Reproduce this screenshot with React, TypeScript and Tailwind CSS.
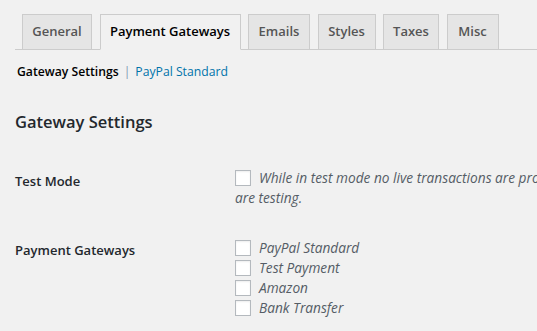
const tabs = [
  { label: "General", w: "w-[70px]" },
  { label: "Payment Gateways", w: "w-[141px]", active: true },
  { label: "Emails", w: "w-[62px]" },
  { label: "Styles", w: "w-[58px]" },
  { label: "Taxes", w: "w-[56px]" },
  { label: "Misc", w: "w-[52px]" },
];

const gateways = ["PayPal Standard", "Test Payment", "Amazon", "Bank Transfer"];

function Checkbox() {
  return (
    <span className="inline-block h-4 w-4 shrink-0 border border-[#b4b9be] bg-white shadow-[inset_0_1px_2px_rgba(0,0,0,0.07)]" />
  );
}

export default function App() {
  return (
    <div
      className="h-[331px] w-[537px] overflow-hidden bg-[#f1f1f1] pt-[14px] text-[#23282d]"
      style={{ fontFamily: '"Open Sans", "Noto Sans", sans-serif' }}
    >
      {/* tab bar */}
      <div className="ml-[15px] flex gap-[7.5px] border-b border-[#ccc] pl-[7px]">
        {tabs.map((t) => (
          <div
            key={t.label}
            className={
              t.active
                ? `${t.w} -mb-px flex h-[36px] items-center justify-center border border-b-[#f1f1f1] border-[#ccc] bg-[#f1f1f1] text-[13px] font-semibold text-black`
                : `${t.w} flex h-[35px] items-center justify-center border border-b-0 border-[#ccc] bg-[#e5e5e5] text-[13px] font-semibold text-[#555]`
            }
          >
            {t.label}
          </div>
        ))}
      </div>

      {/* sub navigation */}
      <div className="ml-[17px] mt-[12px] flex items-center text-[12.2px] leading-[20px]">
        <span className="font-semibold text-black">Gateway Settings</span>
        <span className="mx-[5px] text-[#7e9bb0]">|</span>
        <span className="text-[#0073aa]">PayPal Standard</span>
      </div>

      {/* heading */}
      <h2 className="ml-[15px] mt-[28px] text-[16.5px] font-semibold leading-[24px] text-[#23282d]">
        Gateway Settings
      </h2>

      {/* form rows */}
      <div className="ml-[15px] mt-[16px] grid grid-cols-[220px_1fr]">
        <div className="mt-[22px] text-[13px] font-semibold leading-[18px]">Test Mode</div>
        <div className="mt-[18px] flex gap-2 whitespace-nowrap text-[13.7px] italic leading-[20px] text-[#555d66]">
          <div className="flex h-5 items-center">
            <Checkbox />
          </div>
          <div>
            While in test mode no live transactions are processed. To fully use test mode, you
            <br />
            <span className="-ml-6">are testing.</span>
          </div>
        </div>

        <div className="mt-[33px] text-[13px] font-semibold leading-[18px]">Payment Gateways</div>
        <div className="mt-[30px] flex flex-col text-[13.7px] italic leading-[20px] text-[#555d66]">
          {gateways.map((g) => (
            <div key={g} className="flex h-5 items-center gap-2">
              <Checkbox />
              <span>{g}</span>
            </div>
          ))}
        </div>
      </div>
    </div>
  );
}
